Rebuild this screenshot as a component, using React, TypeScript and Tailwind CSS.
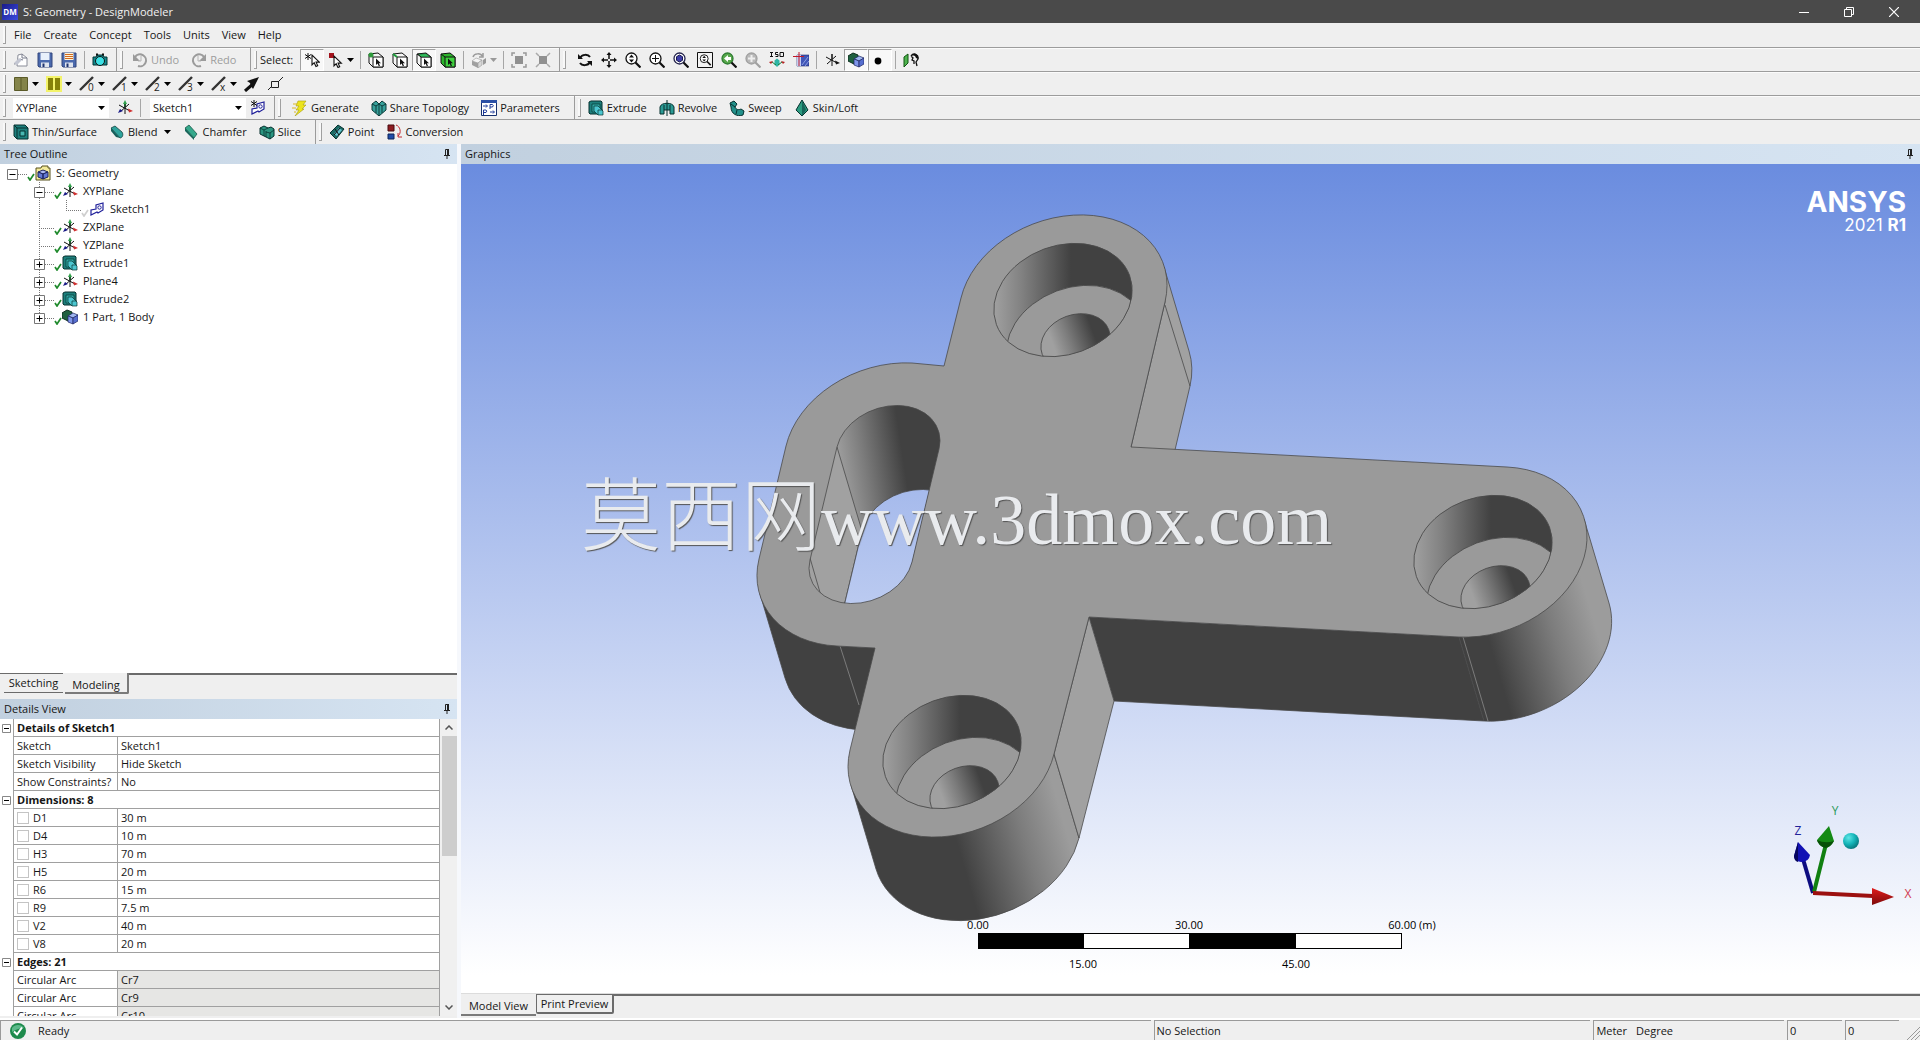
import React from "react";

type Kids = { children?: React.ReactNode };

/* ---------- icon primitives ---------- */

function Icon({ children, className = "" }: Kids & { className?: string }) {
  return (
    <svg viewBox="0 0 16 16" className={`h-4 w-4 shrink-0 ${className}`} aria-hidden="true" fill="none">
      {children}
    </svg>
  );
}

const Caret = ({ dim = false }: { dim?: boolean }) => (
  <svg viewBox="0 0 7 4" className="h-1 w-[7px] shrink-0" aria-hidden="true">
    <path d="M0 0h7L3.500 4z" fill={dim ? "#999" : "#000"} />
  </svg>
);

const CURSOR = "M0 0v9l2-2 1.600 3.500 1.600-.7L3.700 6.500h3z";

const NewIcon = () => (
  <Icon>
    <path d="M5 3l4-1 5 4v8H4z" fill="#fff" stroke="#8a8d98" />
    <path d="M9 2v4h5M1 12c3 0 5-2 6-5l3 1" stroke="#777b8a" />
    <path d="M1 11l5-5 3 2-5 5z" fill="#c3c6d2" />
  </Icon>
);
const SaveIcon = ({ lines = false }: { lines?: boolean }) => (
  <Icon>
    <path d="M1 1h14v14H2l-1-1z" fill="#4a69ad" stroke="#33477d" />
    <path d="M3.500 1h9v7h-9z" fill={lines ? "#fff3d6" : "#e8f0fb"} />
    {lines && <path d="M4 2.500h8M4 4.500h8M4 6.500h8" stroke="#d2691e" />}
    <path d="M4 10.500h8V15H4z" fill="#dfe4ee" />
    <path d="M5.500 11.500h2V15h-2z" fill="#1f3470" />
  </Icon>
);
const CameraIcon = () => (
  <Icon>
    <path d="M1 5h3l1-2h6l1 2h3v8H1z" fill="#13888c" stroke="#033" />
    <path d="M4 2.500h2M10 2.500h2" stroke="#111" strokeWidth="2" />
    <circle cx="8" cy="9" r="4.500" fill="#3be0e4" stroke="#111" />
  </Icon>
);
const UndoIcon = ({ flip = false }: { flip?: boolean }) => (
  <Icon className={flip ? "-scale-x-100" : ""}>
    <path d="M3 5a6 6 0 1 1 3 9" stroke="#9b9b9b" strokeWidth="2" />
    <path d="M1 2v7h7z" fill="#9b9b9b" />
    <path d="M9 4v5h-3" stroke="#b5b5b5" />
  </Icon>
);
const SelectNewIcon = () => (
  <Icon>
    <path d="M4 1v7M1 2.500l6 4M7 2.500l-6 4" stroke="#111" />
    <path d={CURSOR} transform="translate(8 3) scale(1.100)" fill="#fff" stroke="#111" />
  </Icon>
);
const SelectModeIcon = () => (
  <Icon>
    <path d="M1 1h5v5H1z" fill="#a3121c" />
    <path d={CURSOR} transform="translate(6 4) scale(1.100)" fill="#fff" stroke="#111" />
  </Icon>
);
const FilterIcon = ({ kind }: { kind: "point" | "edge" | "face" | "body" }) => {
  const body = kind === "body";
  return (
    <Icon>
      <path d="M1 2l9-1 5 4v10H5L1 11z" fill={body ? "#2cb52c" : "#f6f6f6"} stroke="#111" />
      <path d="M5 5h10v10H5z" fill={body ? "#3fd23f" : "#fff"} stroke="#111" />
      {kind === "face" && <path d="M2 2l8-.5L14.500 5H5z" fill="#2fbd5a" stroke="#111" strokeWidth=".6" />}
      <path d="M1 2l4 3" stroke={kind === "edge" ? "#1d9c3a" : "#111"} strokeWidth={kind === "edge" ? 2 : 1} />
      {kind === "point" && <circle cx="3" cy="3" r="2.500" fill="#2f9a3c" />}
      <path d="M8 6.500v6.500l1.600-1.400 1.200 2.700 1.200-.6-1.200-2.500h2.200z" fill="#111" />
    </Icon>
  );
};
const ExtendIcon = () => (
  <Icon>
    <path d="M1 9l4-3 6 2-4 3z" fill="#f4f4f4" stroke="#999" strokeWidth=".6" />
    <path d="M7 11l4-3v5l-4 3z" fill="#d8d8d8" stroke="#999" strokeWidth=".6" />
    <path d="M1 9l6 2v5l-6-3z" fill="#a0a0a0" />
    <path d="M2 5c1-4 8-4 9-1M12 1v4H8" stroke="#9a9a9a" strokeWidth="1.500" />
    <path d="M12 8l3-2v5l-3 2z" fill="#999" />
  </Icon>
);
const BoxZoomOut = () => (
  <Icon>
    <path d="M4 4h8v8H4z" fill="#909090" />
    <path d="M1 4V1h3M12 1h3v3M15 12v3h-3M4 15H1v-3" stroke="#999" strokeWidth="1.500" />
  </Icon>
);
const BoxZoomIn = () => (
  <Icon>
    <path d="M4 4h8v8H4z" fill="#909090" />
    <path d="M1 1l3 3M15 1l-3 3M15 15l-3-3M1 15l3-3" stroke="#aaa" strokeWidth="1.500" />
  </Icon>
);
const RotateIcon = () => (
  <Icon>
    <path d="M3 6c2-4 8-4 10-1M13 10c-2 4-8 4-10 1" stroke="#111" strokeWidth="2" />
    <path d="M1 2v5h5zM15 14V9h-5z" fill="#111" />
  </Icon>
);
const PanIcon = () => (
  <Icon>
    <path d="M8 3v4M8 9v4M3 8h4M9 8h4" stroke="#111" strokeWidth="1.500" />
    <path d="M8 0l2.500 3h-5zM8 16l-2.500-3h5zM0 8l3-2.500v5zM16 8l-3 2.500v-5z" fill="#111" />
  </Icon>
);
const LensIcon = ({ kind }: { kind: "zoom" | "plus" | "fit" | "box" | "prev" | "next" }) => {
  const c = kind === "prev" ? "#2f7d32" : kind === "next" ? "#a0a0a0" : kind === "fit" ? "#22224a" : "#111";
  return (
    <Icon>
      {kind === "box" && <path d="M.5.500h15v15H.5z" fill="#f4f4f4" stroke="#111" />}
      <g transform={kind === "box" ? "translate(2.500 2) scale(.72)" : undefined}>
        <circle cx="6.500" cy="6.500" r="5.500" fill={kind === "prev" ? "#58a84c" : kind === "next" ? "#b8b8b8" : "#fff"} stroke={c} strokeWidth="1.300" />
        <path d="M10.500 10.500l5 5" stroke={kind === "next" ? "#a0a0a0" : "#111"} strokeWidth="2.200" />
        {(kind === "zoom" || kind === "box") && <path d="M6.500 2.500l2.500 3H4zM6.500 10.500L4 7.500h5z" fill="#111" />}
        {kind === "plus" && <path d="M6.500 3v7M3 6.500h7" stroke="#111" />}
        {kind === "fit" && <path d="M6.500 3l3 1.700v3.600l-3 1.700-3-1.700V4.700z" fill="#3c3ca8" stroke="#161650" />}
        {kind === "prev" && <path d="M3 6.500L7 3v2h3v3H7v2z" fill="#fff" />}
        {kind === "next" && <path d="M6.500 3v7M3 6.500h7" stroke="#eee" strokeWidth="2" />}
      </g>
    </Icon>
  );
};
const IsoIcon = () => (
  <Icon>
    <path d="M1 .5h3M1 4.500h3M2.500.5v4M9 .5H6.500v2H9v2H6.500M11 .5h3.500v4H11z" stroke="#111" />
    <path d="M8 6.500l2.500 2v4L8 15l-2.500-2.500v-4z" fill="#2fb5a5" />
    <path d="M0 10l4-1-2 3zM16 10l-4-1 2 3z" fill="#b32020" />
    <path d="M3 10l4 3M13 10l-4 3" stroke="#1c7b3c" />
  </Icon>
);
const LookAtIcon = () => (
  <Icon>
    <path d="M4 3h12v11H4z" fill="#4056b8" stroke="#1c2a70" strokeWidth=".6" />
    <path d="M4 3h4v11H4z" fill="#c4cdf2" />
    <path d="M9 13l6-8M12 14l4-5" stroke="#8ea0e0" />
    <path d="M0 4.500h11M6 0v14" stroke="#c01828" />
  </Icon>
);
const AxisIcon = ({ mono = false }: { mono?: boolean }) => (
  <Icon>
    <path d="M8 7V2" stroke={mono ? "#111" : "#2fa04a"} strokeWidth={mono ? 1 : 2} />
    <path d="M8 2v12M2 5l11 6M3 12l9-8" stroke="#111" />
    {!mono && <path d="M8 0l2 4H6z" fill="#2fa04a" />}
    <path d="M11 8.500l5 2.500-4 1.500z" fill={mono ? "#111" : "#d03030"} />
    {!mono && <path d="M1 13l2-4 3 2z" fill="#1a1a88" />}
  </Icon>
);
const BodyIcon = () => (
  <Icon>
    <path d="M0 4l5-3 5 2v7l-4 2-6-3z" fill="#1f6040" stroke="#0e2e1e" />
    <path d="M6 7l5-3 5 2-5 3z" fill="#9fb6f0" stroke="#1c2460" strokeWidth=".7" />
    <path d="M6 7l5 2v6l-5-2z" fill="#7f96ea" stroke="#1c2460" strokeWidth=".7" />
    <path d="M11 9l5-3v6l-5 3z" fill="#566ecf" stroke="#1c2460" strokeWidth=".7" />
  </Icon>
);
const DotIcon = () => (
  <Icon>
    <circle cx="6" cy="9" r="3.400" fill="#000" />
  </Icon>
);
const ViewFaceIcon = () => (
  <Icon>
    <path d="M1 5l4-3v9l-4 4z" fill="#4db34d" stroke="#115511" />
    <path d="M8 4c3-4 8-1 7 3l-2 3 1 4M8 4l2 2-1 2 2 1v3" stroke="#111" strokeWidth="1.300" />
    <path d="M9 3c3-3 7 0 6 4l-2-1-1-2z" fill="#111" />
  </Icon>
);
const ColorIcon = ({ yellow = false }: { yellow?: boolean }) => (
  <Icon>
    {yellow ? (
      <>
        <path d="M0 0h16v16H0z" fill="#f3f36a" />
        <path d="M2 2h5v12H2zM9 2h5v12H9z" fill="#86820a" />
      </>
    ) : (
      <>
        <path d="M1.500 1.500h13v13h-13z" fill="#84844a" stroke="#5a5a28" />
        <path d="M8 2v12" stroke="#5a5a28" />
      </>
    )}
  </Icon>
);
const EdgeIcon = ({ mark }: { mark: string }) => (
  <Icon className="overflow-visible">
    <path d="M1 14L14 1" stroke="#333" strokeWidth="2.400" />
    <text x="9" y="15" fontSize="10" fontFamily="Open Sans, sans-serif" fill="#222">{mark}</text>
  </Icon>
);
const DirArrowIcon = () => (
  <Icon>
    <path d="M1 15L9 8" stroke="#111" strokeWidth="3" />
    <path d="M15 1L3 5l3 2 1 3 2 3z" fill="#111" />
  </Icon>
);
const VertexIcon = () => (
  <Icon>
    <path d="M3.500 5.500h7v6h-7zM10 6l5-5M0 14l3-3" stroke="#222" />
  </Icon>
);
const SketchIcon = ({ star = false }: { star?: boolean }) => (
  <Icon>
    <path d="M2 14V9l5-1V4l7-2v7l-5 3-1-1z" fill="#fff" stroke="#20209a" strokeWidth="1.200" />
    <circle cx="10.500" cy="6.500" r="1.700" stroke="#20209a" />
    {star && <path d="M4 0v7M1 1.500l6 4M7 1.500l-6 4" stroke="#111" />}
  </Icon>
);
const BoltIcon = () => (
  <Icon>
    <path d="M6 1h8l-3 4h3l-4 4h2L3 16l4-6H4l3-4H4z" fill="#ece41c" stroke="#a89c10" strokeWidth=".6" />
    <path d="M1 4h4M0 8h4M2 12h2" stroke="#d8b820" />
  </Icon>
);
const ShareIcon = () => (
  <Icon>
    <path d="M1 4l4-3 3 3 3-3 4 3v6l-7 6-7-6z" fill="#36a09a" stroke="#0d3c3a" />
    <path d="M1 4l4 2 3-2 3 2 4-2M5 6v7M11 6v7M8 4v12" stroke="#0d3c3a" />
  </Icon>
);
const ParamIcon = () => (
  <Icon>
    <path d="M.5.500h15v15H.5z" fill="#fff" stroke="#16306e" />
    <path d="M0 0h16v3H0z" fill="#2a4fa5" />
    <path d="M2 6h4M5 4.500L6.500 6 5 7.500M9 12h4M12 10.500l1.500 1.500-1.500 1.500M9 9V4.500h2.500q1.500 1 0 2.500H9M2.500 15v-5H5q1.500 1 0 2.500H2.500" stroke="#1c3a9a" />
  </Icon>
);
const ExtrudeIcon = () => (
  <Icon>
    <path d="M1 2l2-1h10l1 1v11l-2 1H2l-1-1z" fill="#1d7f7c" stroke="#06312f" />
    <path d="M4 4h8v8H4z" fill="#2fa8a4" stroke="#06312f" strokeWidth=".7" />
    <path d="M6 6h4l5 5v4h-5l-4-4z" fill="#4cc6d0" stroke="#06312f" strokeWidth=".7" />
    <path d="M10 15v-5h5" stroke="#06312f" strokeWidth=".7" />
  </Icon>
);
const RevolveIcon = () => (
  <Icon>
    <path d="M1 7c1-5 13-5 14 0v7h-4v-4H5v4H1z" fill="#2a9a94" stroke="#06312f" />
    <path d="M8 0v16M5 5v5M11 5v5" stroke="#06312f" />
  </Icon>
);
const SweepIcon = () => (
  <Icon>
    <path d="M1 3l4-2 3 3-2 3c1 3 4 3 6 2l3 2-1 4c-6 2-12-1-12-8z" fill="#23908a" stroke="#06312f" />
    <path d="M2 4l4 3M8 10l-1 4" stroke="#06312f" />
  </Icon>
);
const LoftIcon = () => (
  <Icon>
    <path d="M8 0l3 5 3 5-6 6-6-6 3-5z" fill="#2c9b80" stroke="#06312f" />
    <path d="M8 0v16l4-6z" fill="#17665a" />
  </Icon>
);
const ThinIcon = () => (
  <Icon>
    <path d="M1 1h11l3 3v11H4l-3-3z" fill="#1d7f7c" stroke="#06312f" />
    <path d="M4 4h11M4 4v11M1 1l3 3" stroke="#06312f" />
    <path d="M7 7h5v5H7z" fill="#49b8b2" stroke="#06312f" />
  </Icon>
);
const BlendIcon = () => (
  <Icon>
    <path d="M2 4l4-2 7 6c2 3 0 6-2 6z" fill="#2fa39c" stroke="#06312f" strokeWidth=".7" />
    <path d="M2 4l9 10-4-1-5-6z" fill="#145e5a" />
  </Icon>
);
const ChamferIcon = () => (
  <Icon>
    <path d="M2 4l4-3 8 9-3 4z" fill="#36a98c" stroke="#0b4a3c" strokeWidth=".7" />
    <path d="M2 4l9 10v2L2 7z" fill="#16665a" />
  </Icon>
);
const SliceIcon = () => (
  <Icon>
    <path d="M1 4l4-2 4 2 3-1 3 2v7l-4 3-4-2-6-3z" fill="#2a9580" stroke="#06312f" />
    <path d="M1 4l4 2 4-2M5 6v6M7 8l4 1 4-3M11 9v6M7 7v6" stroke="#06312f" strokeWidth=".8" />
  </Icon>
);
const PointIcon = () => (
  <Icon>
    <path d="M1 9l8-8 6 4-8 10z" fill="#1c6a64" stroke="#06312f" />
    <path d="M5 10l5-6 3 2-5 6z" fill="#63c4d0" />
    <path d="M6 5l4 6M11 4l-6 7" stroke="#111" />
  </Icon>
);
const ConversionIcon = () => (
  <Icon>
    <path d="M1 1h6v6H1z" fill="#8e1c22" stroke="#470b0e" />
    <path d="M1 10h6v5H1z" fill="#1e4ba8" stroke="#0d2559" />
    <path d="M9 1c4 1 6 8 2 11M11 9v4h4" stroke="#c02a30" />
  </Icon>
);
const ProjectIcon = () => (
  <Icon>
    <path d="M1 3h5l1-2h6v2h2v12H1z" fill="#f4eb9a" stroke="#56511c" />
    <path d="M3 7l5-2 5 2-5 2z" fill="#aab9f2" stroke="#1c2460" />
    <path d="M3 7l5 2v5l-5-2zM8 9l5-2v5l-5 2z" fill="#6278d4" stroke="#1c2460" />
  </Icon>
);
const PinIcon = () => (
  <svg viewBox="0 0 8 12" className="h-3 w-2" aria-hidden="true">
    <path d="M2.500 1.500h3v6h-3zM1 7.500h6M4 8v3" fill="none" stroke="#222" />
    <path d="M4 1h2v6H4z" fill="#222" />
  </svg>
);
const TreeCheck = ({ dim = false }: { dim?: boolean }) => (
  <svg viewBox="0 0 8 8" className="mt-2 h-2 w-2 shrink-0" aria-hidden="true">
    <path d="M1 4l2 3 4-6" fill="none" stroke={dim ? "#cfcfcf" : "#1f8a2c"} strokeWidth="1.700" />
  </svg>
);

/* ---------- toolbar ---------- */

const Grip = () => <span className="mx-[3px] h-[18px] w-[3px] shrink-0 border-r border-b border-[#a0a0a0] bg-[#f8f8f8]" />;
const Sep = () => <span className="mx-[3px] h-[18px] w-px shrink-0 bg-[#a6a6a6]" />;
const End = () => <span className="ml-1 h-6 w-px shrink-0 bg-[#9b9b9b]" />;

function Bar({ children }: Kids) {
  return <div className="flex h-6 shrink-0 items-center border-b border-[#9c9c9c] shadow-[inset_0_1px_0_#fbfbfb]">{children}</div>;
}
function Tool({ label, children, pressed = false, disabled = false }: Kids & { label: string; pressed?: boolean; disabled?: boolean }) {
  return (
    <button
      type="button"
      aria-label={label}
      disabled={disabled}
      className={`flex h-[22px] w-6 shrink-0 items-center justify-center border ${pressed ? "border-t-[#a0a0a0] border-r-white border-b-white border-l-[#a0a0a0] bg-[#f8f8f8]" : "border-transparent"}`}
    >
      {children}
    </button>
  );
}
function DropTool({ label, children, disabled = false }: Kids & { label: string; disabled?: boolean }) {
  return (
    <button type="button" aria-label={label} disabled={disabled} className="flex h-[22px] w-[33px] shrink-0 items-center gap-[3px] pl-1">
      {children}
      <Caret dim={disabled} />
    </button>
  );
}
function TextTool({ icon, children, disabled = false, drop = false }: Kids & { icon: React.ReactNode; disabled?: boolean; drop?: boolean }) {
  return (
    <button type="button" disabled={disabled} className="mr-2.5 flex h-[22px] shrink-0 items-center gap-[3px] pl-0.5 whitespace-nowrap disabled:text-[#9d9d9d]">
      {icon}
      <span>{children}</span>
      {drop && <span className="ml-1"><Caret /></span>}
    </button>
  );
}
function Picker({ label, value }: { label: string; value: string }) {
  return (
    <div className="relative h-5 w-24 shrink-0 bg-white">
      <select aria-label={label} defaultValue={value} className="block h-5 w-full appearance-none bg-transparent pl-[3px] text-[11px] leading-5">
        <option>{value}</option>
      </select>
      <span className="pointer-events-none absolute top-0 right-1 flex h-full items-center">
        <Caret />
      </span>
    </div>
  );
}

function Toolbars() {
  return (
    <div className="flex shrink-0 flex-col bg-[#efefef]">
      <div className="flex h-[25px] shrink-0 items-center border-b border-[#9c9c9c]">
        <Grip />
        <nav className="flex items-center gap-3 pl-[5px]">
          {["File", "Create", "Concept", "Tools", "Units", "View", "Help"].map((m) => (
            <button type="button" key={m}>{m}</button>
          ))}
        </nav>
      </div>
      <Bar>
        <Grip />
        <Tool label="New"><NewIcon /></Tool>
        <Tool label="Save"><SaveIcon /></Tool>
        <Tool label="Save as"><SaveIcon lines /></Tool>
        <Sep />
        <Tool label="Screenshot"><CameraIcon /></Tool>
        <End />
        <Grip />
        <div className="flex w-[120px] items-center pl-1">
          <TextTool icon={<UndoIcon />} disabled>Undo</TextTool>
          <TextTool icon={<UndoIcon flip />} disabled>Redo</TextTool>
        </div>
        <End />
        <Grip />
        <span className="w-10 whitespace-nowrap">Select:</span>
        <Tool label="New selection" pressed><SelectNewIcon /></Tool>
        <DropTool label="Select mode"><SelectModeIcon /></DropTool>
        <Sep />
        <Tool label="Selection filter: points"><FilterIcon kind="point" /></Tool>
        <Tool label="Selection filter: edges"><FilterIcon kind="edge" /></Tool>
        <Tool label="Selection filter: faces" pressed><FilterIcon kind="face" /></Tool>
        <Tool label="Selection filter: bodies"><FilterIcon kind="body" /></Tool>
        <Sep />
        <DropTool label="Extend selection" disabled><ExtendIcon /></DropTool>
        <Sep />
        <Tool label="Expand" disabled><BoxZoomOut /></Tool>
        <Tool label="Shrink" disabled><BoxZoomIn /></Tool>
        <End />
        <Grip />
        <span className="w-1" />
        <Tool label="Rotate"><RotateIcon /></Tool>
        <Tool label="Pan"><PanIcon /></Tool>
        <Tool label="Zoom"><LensIcon kind="zoom" /></Tool>
        <Tool label="Box zoom"><LensIcon kind="plus" /></Tool>
        <Tool label="Zoom to fit"><LensIcon kind="fit" /></Tool>
        <Tool label="Magnifier window"><LensIcon kind="box" /></Tool>
        <Tool label="Previous view"><LensIcon kind="prev" /></Tool>
        <Tool label="Next view" disabled><LensIcon kind="next" /></Tool>
        <Tool label="Isometric view"><IsoIcon /></Tool>
        <Tool label="Look at"><LookAtIcon /></Tool>
        <Sep />
        <Tool label="Display plane"><AxisIcon mono /></Tool>
        <Tool label="Display model" pressed><BodyIcon /></Tool>
        <Tool label="Display points" pressed><DotIcon /></Tool>
        <Sep />
        <Tool label="Look at face"><ViewFaceIcon /></Tool>
      </Bar>
      <Bar>
        <Grip />
        <DropTool label="Face colour"><ColorIcon /></DropTool>
        <DropTool label="Highlight colour"><ColorIcon yellow /></DropTool>
        {["0", "1", "2", "3", "x"].map((m) => (
          <DropTool key={m} label={`Edge display ${m}`}><EdgeIcon mark={m} /></DropTool>
        ))}
        <Tool label="Edge direction"><DirArrowIcon /></Tool>
        <Tool label="Display vertices"><VertexIcon /></Tool>
      </Bar>
      <Bar>
        <Grip />
        <span className="w-1" />
        <Picker label="Active plane" value="XYPlane" />
        <span className="w-1" />
        <Tool label="New plane"><AxisIcon /></Tool>
        <Sep />
        <span className="w-1.5" />
        <Picker label="Active sketch" value="Sketch1" />
        <Tool label="New sketch"><SketchIcon star /></Tool>
        <End />
        <Grip />
        <span className="w-1.5" />
        <TextTool icon={<BoltIcon />}>Generate</TextTool>
        <TextTool icon={<ShareIcon />}>Share Topology</TextTool>
        <TextTool icon={<ParamIcon />}>Parameters</TextTool>
        <End />
        <Grip />
        <span className="w-0.5" />
        <TextTool icon={<ExtrudeIcon />}>Extrude</TextTool>
        <TextTool icon={<RevolveIcon />}>Revolve</TextTool>
        <TextTool icon={<SweepIcon />}>Sweep</TextTool>
        <TextTool icon={<LoftIcon />}>Skin/Loft</TextTool>
      </Bar>
      <div className="flex h-6 shrink-0 items-center">
        <Grip />
        <span className="w-0.5" />
        <TextTool icon={<ThinIcon />}>Thin/Surface</TextTool>
        <TextTool icon={<BlendIcon />} drop>Blend</TextTool>
        <TextTool icon={<ChamferIcon />}>Chamfer</TextTool>
        <TextTool icon={<SliceIcon />}>Slice</TextTool>
        <End />
        <Grip />
        <span className="w-0.5" />
        <TextTool icon={<PointIcon />}>Point</TextTool>
        <TextTool icon={<ConversionIcon />}>Conversion</TextTool>
      </div>
    </div>
  );
}

/* ---------- tree ---------- */

function PanelHeader({ title }: { title: string }) {
  return (
    <div className="flex h-5 shrink-0 items-center justify-between bg-linear-to-r from-[#c1d0df] to-[#d6e4f2] pr-1.5 pl-1">
      <h2>{title}</h2>
      <button type="button" aria-label={`Pin ${title}`}><PinIcon /></button>
    </div>
  );
}

type Node = { name: string; level: 0 | 1 | 2; box?: "+" | "-"; icon: React.ReactNode; dim?: boolean; last?: boolean };

const NODES: Node[] = [
  { name: "S: Geometry", level: 0, box: "-", icon: <ProjectIcon /> },
  { name: "XYPlane", level: 1, box: "-", icon: <AxisIcon /> },
  { name: "Sketch1", level: 2, icon: <SketchIcon />, dim: true },
  { name: "ZXPlane", level: 1, icon: <AxisIcon /> },
  { name: "YZPlane", level: 1, icon: <AxisIcon /> },
  { name: "Extrude1", level: 1, box: "+", icon: <ExtrudeIcon /> },
  { name: "Plane4", level: 1, box: "+", icon: <AxisIcon /> },
  { name: "Extrude2", level: 1, box: "+", icon: <ExtrudeIcon /> },
  { name: "1 Part, 1 Body", level: 1, box: "+", icon: <BodyIcon />, last: true },
];

function Branch({ node }: { node: Node }) {
  const end = node.last || node.level === 2 ? 10 : 18;
  return (
    <svg viewBox="0 0 27 18" className="h-[18px] w-[27px] shrink-0" aria-hidden="true">
      {node.level > 0 && <path d={`M12.500 0V${end}`} stroke="#777" strokeDasharray="1 1" />}
      <path d="M12 10.500H27" stroke="#777" strokeDasharray="1 1" />
      {node.box && (
        <>
          <path d="M7.500 5.500h10v10h-10z" fill="#fff" stroke="#777" />
          <path d={node.box === "+" ? "M9.500 10.500h6M12.500 7.500v6" : "M9.500 10.500h6"} stroke="#000" />
        </>
      )}
    </svg>
  );
}

function Tree() {
  return (
    <ul className="min-h-0 flex-1 overflow-hidden bg-white">
      {NODES.map((n) => (
        <li key={n.name} className="flex h-[18px] items-center">
          {n.level === 1 && <span className="w-[27px] shrink-0" />}
          {n.level === 2 && (
            <>
              <span className="w-[27px] shrink-0" />
              <svg viewBox="0 0 27 18" className="h-[18px] w-[27px] shrink-0" aria-hidden="true">
                <path d="M12.500 0v18" stroke="#777" strokeDasharray="1 1" />
              </svg>
            </>
          )}
          <Branch node={n} />
          <TreeCheck dim={n.dim} />
          {n.icon}
          <span className="pl-[5px] whitespace-nowrap">{n.name}</span>
        </li>
      ))}
    </ul>
  );
}

/* ---------- details ---------- */

type Row = { group?: string; name?: string; value?: string; check?: boolean; locked?: boolean };

const ROWS: Row[] = [
  { group: "Details of Sketch1" },
  { name: "Sketch", value: "Sketch1" },
  { name: "Sketch Visibility", value: "Hide Sketch" },
  { name: "Show Constraints?", value: "No" },
  { group: "Dimensions: 8" },
  { name: "D1", value: "30 m", check: true },
  { name: "D4", value: "10 m", check: true },
  { name: "H3", value: "70 m", check: true },
  { name: "H5", value: "20 m", check: true },
  { name: "R6", value: "15 m", check: true },
  { name: "R9", value: "7.5 m", check: true },
  { name: "V2", value: "40 m", check: true },
  { name: "V8", value: "20 m", check: true },
  { group: "Edges: 21" },
  { name: "Circular Arc", value: "Cr7", locked: true },
  { name: "Circular Arc", value: "Cr9", locked: true },
  { name: "Circular Arc", value: "Cr10", locked: true },
];

function Details() {
  return (
    <div className="mb-0.5 flex h-[297px] shrink-0 overflow-hidden bg-white">
      <div className="min-w-0 flex-1 overflow-hidden">
        <table className="w-full table-fixed border-separate border-spacing-0 leading-[17px]">
          <colgroup>
            <col className="w-[13px]" />
            <col className="w-[104px]" />
            <col />
          </colgroup>
          <tbody>
            {ROWS.map((r, i) =>
              r.group ? (
                <tr key={i} className="h-[18px]">
                  <td className="p-0">
                    <button type="button" aria-label={`Collapse ${r.group}`} className="flex h-[17px] items-center pl-0.5">
                      <svg viewBox="0 0 9 9" className="h-[9px] w-[9px]" aria-hidden="true">
                        <path d="M.5.500h8v8h-8z" fill="#fff" stroke="#888" />
                        <path d="M2 4.500h5" stroke="#000" />
                      </svg>
                    </button>
                  </td>
                  <th colSpan={2} scope="rowgroup" className="border-r border-b border-l border-[#a0a0a0] p-0 pl-[3px] text-left font-bold">
                    {r.group}
                  </th>
                </tr>
              ) : (
                <tr key={i} className="h-[18px]">
                  <td className="p-0" />
                  <th scope="row" className="border-b border-l border-[#a0a0a0] p-0 pl-[3px] text-left font-normal whitespace-nowrap">
                    {r.check ? (
                      <label className="flex items-center gap-1">
                        <input type="checkbox" className="h-3 w-3 appearance-none border border-[#c4c4c4] bg-white" />
                        {r.name}
                      </label>
                    ) : (
                      r.name
                    )}
                  </th>
                  <td className={`border-r border-b border-l border-[#a0a0a0] p-0 pl-[3px] ${r.locked ? "bg-[#e6e6e4]" : ""}`}>{r.value}</td>
                </tr>
              )
            )}
          </tbody>
        </table>
      </div>
      <div className="flex w-[17px] flex-col items-center justify-between bg-[#f0f0f0] pl-px">
        <button type="button" aria-label="Scroll up" className="flex h-[17px] items-center">
          <svg viewBox="0 0 8 5" className="h-[5px] w-2"><path d="M.5 4.500L4 1l3.500 3.500" fill="none" stroke="#555" strokeWidth="1.500" /></svg>
        </button>
        <div className="h-[120px] w-[15px] bg-[#cdcdcd]" />
        <div className="flex-1" />
        <button type="button" aria-label="Scroll down" className="flex h-[17px] items-center">
          <svg viewBox="0 0 8 5" className="h-[5px] w-2"><path d="M.5.500L4 4l3.500-3.500" fill="none" stroke="#555" strokeWidth="1.500" /></svg>
        </button>
      </div>
    </div>
  );
}

function LeftPanel() {
  return (
    <aside className="flex w-[457px] shrink-0 flex-col bg-[#efefef]">
      <PanelHeader title="Tree Outline" />
      <Tree />
      <div role="tablist" className="flex h-[26px] shrink-0 items-start">
        <span className="h-px w-1 bg-[#6b6b6b]" />
        <button type="button" role="tab" aria-selected={false} className="h-5 w-[59px] border-t border-b border-[#6b6b6b] whitespace-nowrap">Sketching</button>
        <button type="button" role="tab" aria-selected className="ml-0.5 h-[21px] w-16 rounded-br-xs border-r-2 border-b-2 border-[#7a7a7a] pt-1 leading-4 whitespace-nowrap">Modeling</button>
        <span className="h-0.5 flex-1 bg-[#6b6b6b]" />
      </div>
      <PanelHeader title="Details View" />
      <Details />
    </aside>
  );
}

/* ---------- model view ---------- */

const SLOT = "M837 447A53.300 40.800 -20.300 0 1 939 449L912 562A53.300 40.800 -20.300 0 1 810 560Z";
const TOP_FACE =
  "M944 366L961 298A106.600 81.600 -20.300 0 1 1165 302L1131 447L1507 467A106.600 81.600 -20.300 0 1 1459 637L1089 617L1054 754A106.600 81.600 -20.300 0 1 850 750L875 648L837 646A106.600 81.600 -20.300 0 1 759 559L786 446A106.600 81.600 -20.300 0 1 912 363Z";

function Bore({ id, x, y }: { id: string; x: number; y: number }) {
  return (
    <g transform={`translate(${x} ${y})`}>
      <clipPath id={id}>
        <ellipse rx="71" ry="54.400" transform="rotate(-20.300)" />
      </clipPath>
      <g clipPath={`url(#${id})`}>
        <rect x="-80" y="-70" width="160" height="140" fill="url(#boreWall)" />
        <ellipse rx="71" ry="54.400" transform="translate(12.500 42) rotate(-20.300)" fill="#9a9a9a" stroke="#4a4a4a" strokeWidth=".8" />
        <ellipse rx="35.500" ry="27.200" transform="translate(12.500 42) rotate(-20.300)" fill="url(#smallWall)" stroke="#4a4a4a" strokeWidth=".8" />
      </g>
      <ellipse rx="71" ry="54.400" transform="rotate(-20.300)" stroke="#4a4a4a" strokeWidth=".8" fill="none" />
    </g>
  );
}

function Scene() {
  return (
    <svg viewBox="461 164 1459 829" preserveAspectRatio="xMidYMid slice" className="h-full w-full" role="img" aria-label="Bracket model" fill="none" fontFamily="Open Sans, sans-serif" fontSize="11">
      <defs>
        <linearGradient id="sky" gradientUnits="userSpaceOnUse" x1="0" y1="164" x2="0" y2="975">
          <stop offset="0" stopColor="#6a8cdf" />
          <stop offset="1" stopColor="#ffffff" />
        </linearGradient>
        <linearGradient id="boreWall" gradientUnits="userSpaceOnUse" x1="-69" y1="0" x2="8" y2="0">
          <stop offset="0" stopColor="#a0a0a0" />
          <stop offset=".35" stopColor="#828282" />
          <stop offset="1" stopColor="#414141" />
        </linearGradient>
        <linearGradient id="smallWall" gradientUnits="userSpaceOnUse" x1="-22" y1="0" x2="20" y2="0">
          <stop offset="0" stopColor="#a0a0a0" />
          <stop offset=".4" stopColor="#7c7c7c" />
          <stop offset="1" stopColor="#414141" />
        </linearGradient>
        <linearGradient id="slotWall" gradientUnits="userSpaceOnUse" x1="840" y1="480" x2="905" y2="470">
          <stop offset="0" stopColor="#a0a0a0" />
          <stop offset=".4" stopColor="#7c7c7c" />
          <stop offset="1" stopColor="#414141" />
        </linearGradient>
        <linearGradient id="armEnd" gradientUnits="userSpaceOnUse" x1="1496" y1="665" x2="1598" y2="635">
          <stop offset="0" stopColor="#414141" />
          <stop offset=".6" stopColor="#7c7c7c" />
          <stop offset="1" stopColor="#9c9c9c" />
        </linearGradient>
        <linearGradient id="footEnd" gradientUnits="userSpaceOnUse" x1="962" y1="860" x2="1066" y2="830">
          <stop offset="0" stopColor="#414141" />
          <stop offset=".6" stopColor="#7c7c7c" />
          <stop offset="1" stopColor="#9c9c9c" />
        </linearGradient>
        <radialGradient id="ball" cx=".35" cy=".3" r=".8">
          <stop offset="0" stopColor="#5fe6e6" />
          <stop offset=".5" stopColor="#14b4b8" />
          <stop offset="1" stopColor="#046a70" />
        </radialGradient>
        <linearGradient id="redRod" x1="0" y1="0" x2="0" y2="1">
          <stop offset="0" stopColor="#e01c1c" />
          <stop offset="1" stopColor="#7c0a0a" />
        </linearGradient>
        <clipPath id="slotClip"><path d={SLOT} /></clipPath>
        <clipPath id="slotFar"><path d={SLOT} transform="translate(25 84)" /></clipPath>
      </defs>

      <rect x="461" y="164" width="1459" height="829" fill="url(#sky)" />

      <g stroke="#4a4a4a" strokeWidth=".8">
        <path d="M1164 267L1189 351A106.600 81.600 -20.300 0 1 1190 386L1156 531L1131 447L1165 302Z" fill="#a1a1a1" />
        <path d="M1165 305L1190 386" />
        <path d="M760 594L785 678A106.600 81.600 -20.300 0 0 862 730L900 732L875 648L837 646Z" fill="#414141" />
        <path d="M1089 617L1114 701L1484 721L1459 637Z" fill="#414141" />
        <path d="M1459 637L1484 721A106.600 81.600 -20.300 0 0 1609 603L1584 519Z" fill="url(#armEnd)" />
        <path d="M851 785L876 869A106.600 81.600 -20.300 0 0 1079 838L1054 754Z" fill="url(#footEnd)" />
        <path d="M1089 617L1114 701L1079 838L1054 754Z" fill="#a1a1a1" />
      </g>
      <path d="M840 646L859 705M1463 637L1488 721" stroke="#8a8a8a" strokeWidth=".8" />
      <path d={TOP_FACE} fill="#9a9a9a" stroke="#4a4a4a" strokeWidth=".8" />

      <g clipPath="url(#slotClip)">
        <rect x="800" y="400" width="150" height="210" fill="url(#slotWall)" />
        <path d="M837 447L862 531L835 644H790V447Z" fill="#a1a1a1" stroke="#4a4a4a" strokeWidth=".8" />
        <path d="M810 558L835 644" stroke="#4a4a4a" strokeWidth=".8" />
        <rect x="461" y="164" width="1459" height="829" fill="url(#sky)" clipPath="url(#slotFar)" />
        <path d={SLOT} transform="translate(25 84)" stroke="#4a4a4a" strokeWidth=".8" />
      </g>
      <path d={SLOT} stroke="#4a4a4a" strokeWidth=".8" />

      <Bore id="boreTop" x={1063} y={300} />
      <Bore id="boreArm" x={1483} y={552} />
      <Bore id="boreFoot" x={952} y={752} />

      {/* ruler */}
      <rect x="978.500" y="933.500" width="423" height="15" fill="#fff" stroke="#000" />
      <path d="M978 933h106v16H978zM1189 933h107v16h-107z" fill="#000" />
      <g fill="#000" textAnchor="middle">
        <text x="978" y="929">0.00</text>
        <text x="1189" y="929">30.00</text>
        <text x="1412" y="929">60.00 (m)</text>
        <text x="1083" y="968">15.00</text>
        <text x="1296" y="968">45.00</text>
      </g>

      {/* orientation triad */}
      <path d="M1813 893L1803 859" stroke="#0c0c80" strokeWidth="4" />
      <path d="M1798 842L1810 855Q1809 862 1801 862Q1794 861 1794 856Z" fill="#1212b4" />
      <path d="M1798 842L1794 856Q1794 861 1798 862Z" fill="#06065e" />
      <path d="M1814 892L1826 844" stroke="#118011" strokeWidth="4" />
      <path d="M1829 826L1834 841Q1830 848 1825 848Q1818 845 1817 840Z" fill="#158a15" />
      <path d="M1817 840Q1825 844 1834 841Q1830 848 1825 848Q1818 845 1817 840Z" fill="#075007" />
      <path d="M1813 891L1873 894V898L1813 895Z" fill="#9c1010" />
      <path d="M1872 888L1894 897L1872 905Z" fill="url(#redRod)" />
      <circle cx="1851" cy="841" r="8" fill="url(#ball)" />
      <g textAnchor="middle" fontSize="12">
        <text x="1835" y="815" fill="#2a9a5a">Y</text>
        <text x="1798" y="835" fill="#22229a">Z</text>
        <text x="1908" y="898" fill="#d03a50">X</text>
      </g>
    </svg>
  );
}

function GraphicsPanel() {
  return (
    <main className="flex min-w-0 flex-1 flex-col bg-[#efefef]">
      <PanelHeader title="Graphics" />
      <div className="relative min-h-0 flex-1 overflow-hidden">
        <Scene />
        <div className="absolute top-[25px] right-3.5 text-right font-['Inter'] text-white">
          <div className="text-[28px] leading-[26px] font-bold">ANSYS</div>
          <div className="text-[17px] leading-5">2021 <b>R1</b></div>
        </div>
        <div className="absolute top-[297px] left-[120px] flex items-baseline leading-[96px] whitespace-nowrap text-[#e9ebee] [text-shadow:1px_1px_1px_#555]">
          <span className="font-['Noto_Sans_CJK_SC',sans-serif] text-[80px] font-light">莫西网</span>
          <span className="font-['Liberation_Serif',serif] text-[72px]">www.3dmox.com</span>
        </div>
      </div>
      <div role="tablist" className="flex h-[25px] shrink-0 items-start border-t border-[#dcdcdc]">
        <button type="button" role="tab" aria-selected className="h-[22px] w-[75px] border-b-2 border-[#7a7a7a] pt-1 leading-4">Model View</button>
        <button type="button" role="tab" aria-selected={false} className="h-5 w-[78px] rounded-b-xs border-2 border-t border-l border-[#6b6b6b] leading-4 whitespace-nowrap">Print Preview</button>
        <span className="h-0.5 flex-1 bg-[#6b6b6b]" />
      </div>
    </main>
  );
}

/* ---------- status ---------- */

function StatusBar() {
  const cell = "flex h-full items-center border-t border-l border-[#9a9a9a] pl-0.5";
  return (
    <footer className="flex h-[22px] shrink-0 gap-[3px] border-t-2 border-white bg-[#efefef]">
      <div className={`${cell} flex-[1156] gap-3`}>
        <svg viewBox="0 0 16 16" className="ml-[7px] h-4 w-4" aria-hidden="true">
          <circle cx="8" cy="8" r="8" fill="#1d8a4c" />
          <path d="M2 5a7 6 0 0 1 12 0q-6 0-12 4z" fill="#5cb98a" />
          <path d="M4 8.500l3 3L12 4.500" fill="none" stroke="#fff" strokeWidth="2" />
        </svg>
        <span>Ready</span>
      </div>
      <div className={`${cell} flex-[437]`}>No Selection</div>
      <div className={`${cell} flex-[189] gap-[9px]`}><span>Meter</span><span>Degree</span></div>
      <div className={`${cell} w-[55px]`}>0</div>
      <div className={`${cell} w-[54px]`}>0</div>
      <div className="flex w-[18px] items-end justify-end">
        <svg viewBox="0 0 14 14" className="h-3.5 w-3.5" aria-hidden="true"><path d="M1 14L14 1M5 14l9-9M9 14l5-5" stroke="#999" fill="none" /></svg>
      </div>
    </footer>
  );
}

export default function App() {
  return (
    <div className="flex h-screen flex-col overflow-hidden bg-[#f6f8fc] font-['Open_Sans',sans-serif] text-[11px] leading-4 text-[#161616]">
      <header className="flex h-[23px] shrink-0 items-center justify-between bg-[#4a4a4a] text-[#f2f2f2]">
        <div className="flex items-center gap-[5px] pl-0.5">
          <span className="flex h-4 w-4 items-center justify-center bg-linear-to-br from-[#1b1b8a] to-[#3c4ce0] text-[8px] leading-4 font-bold text-white">DM</span>
          <h1>S: Geometry - DesignModeler</h1>
        </div>
        <div className="flex h-full items-center pr-1">
          <button type="button" aria-label="Minimize" className="flex h-full w-[45px] items-center justify-center"><svg viewBox="0 0 10 10" className="h-2.5 w-2.5"><path d="M0 5.500h10" stroke="#fff" /></svg></button>
          <button type="button" aria-label="Restore" className="flex h-full w-[45px] items-center justify-center"><svg viewBox="0 0 10 10" className="h-2.5 w-2.5"><path d="M.5 2.500h7v7h-7zM2.500 2.500v-2h7v7h-2" stroke="#fff" fill="none" /></svg></button>
          <button type="button" aria-label="Close" className="flex h-full w-[45px] items-center justify-center"><svg viewBox="0 0 10 10" className="h-2.5 w-2.5"><path d="M0 0l10 10M10 0L0 10" stroke="#fff" strokeWidth="1.200" /></svg></button>
        </div>
      </header>
      <Toolbars />
      <div className="flex min-h-0 flex-1 gap-1">
        <LeftPanel />
        <GraphicsPanel />
      </div>
      <StatusBar />
    </div>
  );
}
